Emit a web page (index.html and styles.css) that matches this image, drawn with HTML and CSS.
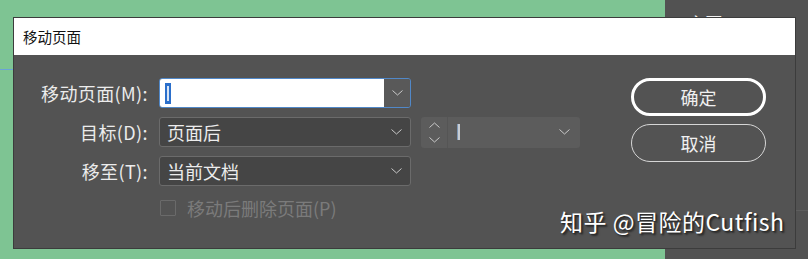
FILE: index.html
```html
<!DOCTYPE html>
<html lang="zh-CN">
<head>
  <meta charset="UTF-8" />
  <title>移动页面</title>
  <meta name="viewport" content="width=device-width, initial-scale=1.0" />
  <link rel="stylesheet" href="styles.css">
</head>
<body>
  <div class="desk">
    <!-- panel behind the dialog -->
    <div class="side-panel">
      <span class="side-title">A 主页</span>
      <div class="side-rule"></div>
    </div>
    <div class="guide"></div>

    <div class="dialog">
      <div class="titlebar">移动页面</div>
      <div class="dialog-body">
        <div class="form">
          <div class="row">
            <label class="label">移动页面(M):</label>
            <div class="combo combo-active">
              <div class="combo-field"><span class="caret-sel"></span></div>
              <div class="combo-btn">
                <svg width="11" height="6" viewBox="0 0 11 6"><polyline points="0.5,0.5 5.5,5 10.5,0.5" /></svg>
              </div>
            </div>
          </div>
          <div class="row">
            <label class="label">目标(D):</label>
            <div class="select">
              <span>页面后</span>
              <svg width="11" height="6" viewBox="0 0 11 6"><polyline points="0.5,0.5 5.5,5 10.5,0.5" /></svg>
            </div>
            <div class="spinner">
              <div class="spin-arrows">
                <svg width="11" height="6" viewBox="0 0 11 6"><polyline points="0.5,5.5 5.5,1 10.5,5.5" /></svg>
                <svg width="11" height="6" viewBox="0 0 11 6"><polyline points="0.5,0.5 5.5,5 10.5,0.5" /></svg>
              </div>
              <div class="spin-field"><span class="caret"></span></div>
              <svg class="spin-drop" width="11" height="6" viewBox="0 0 11 6"><polyline points="0.5,0.5 5.5,5 10.5,0.5" /></svg>
            </div>
          </div>
          <div class="row">
            <label class="label">移至(T):</label>
            <div class="select">
              <span>当前文档</span>
              <svg width="11" height="6" viewBox="0 0 11 6"><polyline points="0.5,0.5 5.5,5 10.5,0.5" /></svg>
            </div>
          </div>
          <div class="check-row">
            <span class="checkbox"></span>
            <span class="check-label">移动后删除页面(P)</span>
          </div>
        </div>

        <div class="buttons">
          <button class="btn btn-primary">确定</button>
          <button class="btn">取消</button>
        </div>
      </div>
    </div>

    <div class="watermark">知乎 @冒险的Cutfish</div>
  </div>
</body>
</html>
```

FILE: styles.css
```css
:root {
  --green: #7ec493;
  --panel: #535353;
  --field: #454545;
  --field-border: #6b6b6b;
  --text: #ececec;
  --muted: #7b7b7b;
  --blue: #5188c8;
}

body {
  margin: 0;
  font-family: "Noto Sans CJK SC", "Noto Sans", sans-serif;
  background: var(--green);
}

.desk {
  position: relative;
  width: 808px;
  height: 259px;
  overflow: hidden;
}

.side-panel {
  position: absolute;
  left: 665px;
  top: 0;
  right: 0;
  bottom: 0;
  background: #525252;
}

.side-title {
  position: absolute;
  left: 9px;
  top: 10px;
  font-size: 17px;
  color: #f2f2f2;
}

.side-rule {
  position: absolute;
  left: 0;
  right: 0;
  top: 210px;
  border-top: 1px solid #5e5e5e;
}

.guide {
  position: absolute;
  left: 0;
  top: 69px;
  width: 13px;
  border-top: 1px solid #6aa3d8;
}

.dialog {
  position: absolute;
  left: 13px;
  top: 17px;
  width: 781px;
  height: 230px;
  border: 1px solid #3c3c3c;
  background: var(--panel);
  display: flex;
  flex-direction: column;
}

.titlebar {
  height: 37px;
  background: #fff;
  color: #111;
  font-size: 14.5px;
  line-height: 37px;
  padding-left: 9px;
}

.dialog-body {
  display: flex;
  padding-top: 23px;
}

.form {
  display: flex;
  flex-direction: column;
  gap: 9px;
}

.row {
  display: flex;
  align-items: center;
  height: 30px;
}

.label {
  width: 134px;
  margin-right: 11px;
  text-align: right;
  font-size: 18px;
  letter-spacing: 0.4px;
  color: var(--text);
  white-space: nowrap;
}

svg polyline {
  fill: none;
  stroke: #c9c9c9;
  stroke-width: 1;
}

.combo {
  display: flex;
  width: 252px;
  height: 30px;
  box-sizing: border-box;
  border: 1px solid var(--blue);
  border-radius: 3px;
  overflow: hidden;
}

.combo-field {
  flex: 1;
  background: #fff;
  display: flex;
  align-items: center;
  padding-left: 5px;
}

.caret-sel {
  display: block;
  width: 6px;
  height: 21px;
  background: #2b6fcb;
  position: relative;
}

.caret-sel::after {
  content: "";
  position: absolute;
  left: 2px;
  top: 3px;
  bottom: 3px;
  width: 2px;
  background: #d6e4f6;
}

.combo-btn {
  width: 26px;
  background: #595959;
  display: flex;
  align-items: center;
  justify-content: center;
}

.select {
  display: flex;
  align-items: center;
  justify-content: space-between;
  width: 252px;
  height: 30px;
  box-sizing: border-box;
  padding: 0 8px 0 7px;
  background: var(--field);
  border: 1px solid var(--field-border);
  border-radius: 3px;
  font-size: 18px;
  color: var(--text);
}

.spinner {
  display: flex;
  align-items: center;
  width: 159px;
  height: 31px;
  margin-left: 10px;
  background: #5c5c5c;
  border-radius: 3px;
}

.spin-arrows {
  width: 26px;
  height: 100%;
  display: flex;
  flex-direction: column;
  align-items: center;
  justify-content: center;
  gap: 9px;
  border-right: 1px solid #555;
}

.spin-field {
  flex: 1;
  padding-left: 9px;
  display: flex;
  align-items: center;
}

.caret {
  display: block;
  width: 2px;
  height: 16px;
  background: #c8cdd3;
  border-left: 1px solid #7e97b5;
}

.spin-drop {
  margin-right: 10px;
}

.check-row {
  display: flex;
  align-items: center;
  margin-top: 4px;
  padding-left: 146px;
  height: 18px;
}

.checkbox {
  width: 16px;
  height: 16px;
  box-sizing: border-box;
  border: 1px solid #6a6a6a;
  border-radius: 1px;
  margin-right: 11px;
}

.check-label {
  font-size: 18px;
  color: var(--muted);
}

.buttons {
  display: flex;
  flex-direction: column;
  gap: 8px;
  margin-left: 51px;
}

.btn {
  width: 135px;
  height: 38px;
  box-sizing: border-box;
  border: 1px solid #d6d6d6;
  border-radius: 19px;
  background: transparent;
  color: #f0f0f0;
  font-family: inherit;
  font-size: 18px;
  padding: 0;
}

.btn-primary {
  border: 3px solid #fff;
}

.watermark {
  position: absolute;
  left: 560px;
  top: 204px;
  font-size: 23px;
  letter-spacing: 0.5px;
  color: #fff;
  text-shadow: 1px 1px 1px #2a2a2a, 2px 2px 2px rgba(0, 0, 0, 0.5);
  white-space: nowrap;
}
```
